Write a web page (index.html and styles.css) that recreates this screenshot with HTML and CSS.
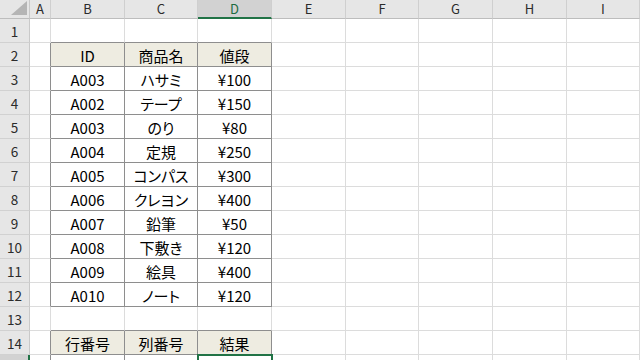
FILE: index.html
```html
<!DOCTYPE html>
<html lang="ja">
<head>
<meta charset="utf-8">
<link rel="stylesheet" href="styles.css">
</head>
<body>
<div class="sheet">
  <div class="corner"><svg class="tri" width="16" height="14" viewBox="0 0 16 14"><polygon points="16,0 16,14 0,14" fill="#b5b5b5"/></svg></div>
  <div class="hd">A</div><div class="hd">B</div><div class="hd">C</div><div class="hd sel">D</div><div class="hd">E</div><div class="hd">F</div><div class="hd">G</div><div class="hd">H</div><div class="hd">I</div>

  <div class="rh">1</div><div class="c"></div><div class="c tt"></div><div class="c tt"></div><div class="c tt"></div><div class="c"></div><div class="c"></div><div class="c"></div><div class="c"></div><div class="c"></div>

  <div class="rh">2</div><div class="c tl"></div><div class="c t th">ID</div><div class="c t th">商品名</div><div class="c t th">値段</div><div class="c"></div><div class="c"></div><div class="c"></div><div class="c"></div><div class="c"></div>

  <div class="rh">3</div><div class="c tl"></div><div class="c t">A003</div><div class="c t">ハサミ</div><div class="c t">¥100</div><div class="c"></div><div class="c"></div><div class="c"></div><div class="c"></div><div class="c"></div>

  <div class="rh">4</div><div class="c tl"></div><div class="c t">A002</div><div class="c t">テープ</div><div class="c t">¥150</div><div class="c"></div><div class="c"></div><div class="c"></div><div class="c"></div><div class="c"></div>

  <div class="rh">5</div><div class="c tl"></div><div class="c t">A003</div><div class="c t">のり</div><div class="c t">¥80</div><div class="c"></div><div class="c"></div><div class="c"></div><div class="c"></div><div class="c"></div>

  <div class="rh">6</div><div class="c tl"></div><div class="c t">A004</div><div class="c t">定規</div><div class="c t">¥250</div><div class="c"></div><div class="c"></div><div class="c"></div><div class="c"></div><div class="c"></div>

  <div class="rh">7</div><div class="c tl"></div><div class="c t">A005</div><div class="c t">コンパス</div><div class="c t">¥300</div><div class="c"></div><div class="c"></div><div class="c"></div><div class="c"></div><div class="c"></div>

  <div class="rh">8</div><div class="c tl"></div><div class="c t">A006</div><div class="c t">クレヨン</div><div class="c t">¥400</div><div class="c"></div><div class="c"></div><div class="c"></div><div class="c"></div><div class="c"></div>

  <div class="rh">9</div><div class="c tl"></div><div class="c t">A007</div><div class="c t">鉛筆</div><div class="c t">¥50</div><div class="c"></div><div class="c"></div><div class="c"></div><div class="c"></div><div class="c"></div>

  <div class="rh">10</div><div class="c tl"></div><div class="c t">A008</div><div class="c t">下敷き</div><div class="c t">¥120</div><div class="c"></div><div class="c"></div><div class="c"></div><div class="c"></div><div class="c"></div>

  <div class="rh">11</div><div class="c tl"></div><div class="c t">A009</div><div class="c t">絵具</div><div class="c t">¥400</div><div class="c"></div><div class="c"></div><div class="c"></div><div class="c"></div><div class="c"></div>

  <div class="rh">12</div><div class="c tl"></div><div class="c t">A010</div><div class="c t">ノート</div><div class="c t">¥120</div><div class="c"></div><div class="c"></div><div class="c"></div><div class="c"></div><div class="c"></div>

  <div class="rh">13</div><div class="c"></div><div class="c tt"></div><div class="c tt"></div><div class="c tt"></div><div class="c"></div><div class="c"></div><div class="c"></div><div class="c"></div><div class="c"></div>

  <div class="rh">14</div><div class="c tl"></div><div class="c t th">行番号</div><div class="c t th">列番号</div><div class="c t th">結果</div><div class="c"></div><div class="c"></div><div class="c"></div><div class="c"></div><div class="c"></div>

  <div class="rh rsel"></div><div class="c tl"></div><div class="c t"></div><div class="c t"></div><div class="c t active"></div><div class="c"></div><div class="c"></div><div class="c"></div><div class="c"></div><div class="c"></div>
</div>
</body>
</html>
```

FILE: styles.css
```css
html, body {
  margin: 0;
  padding: 0;
  background: #ffffff;
  overflow: hidden;
}

.sheet {
  display: grid;
  grid-template-columns: 30px 21px 74px 73px 74px 74px 73px 74px 74px 73px;
  grid-template-rows: 19px repeat(15, 24px);
  width: 640px;
  height: 360px;
  overflow: hidden;
  font-family: "Noto Sans CJK JP", "Noto Sans", sans-serif;
  color: #000;
}

.sheet > div {
  box-sizing: border-box;
  display: flex;
  align-items: center;
  justify-content: center;
  white-space: nowrap;
  overflow: hidden;
}

.corner {
  background: #e6e6e6;
  border-right: 1px solid #c9c9c9;
  border-bottom: 1px solid #bdbdbd;
  justify-content: flex-end !important;
  align-items: flex-end !important;
  padding: 0 2px 3px 0;
}

.tri { display: block; }

.hd {
  background: #e6e6e6;
  border-right: 1px solid #cfcfcf;
  border-bottom: 1px solid #bdbdbd;
  font-size: 13px;
  color: #2b2b2b;
  line-height: 18px;
}

.hd.sel {
  background: #d2d2d2;
  color: #1e6b41;
  border-bottom: 2px solid #217346;
}

.rh {
  background: #e6e6e6;
  border-right: 1px solid #c9c9c9;
  border-bottom: 1px solid #d1d1d1;
  font-size: 13.5px;
  color: #2b2b2b;
  padding-top: 1px;
}

.rh.rsel {
  background: #d2d2d2;
  border-right: 2px solid #217346;
}

.c {
  border-right: 1px solid #dcdcdc;
  border-bottom: 1px solid #dcdcdc;
  font-size: 15px;
  padding-top: 1px;
  font-feature-settings: "palt";
}

.c.t {
  border-right-color: #8e8e8e;
  border-bottom-color: #8e8e8e;
}

.c.tl { border-right-color: #8e8e8e; }
.c.tt { border-bottom-color: #8e8e8e; }

.th { background: #eeece1; }

.active {
  outline: 2px solid #217346;
  outline-offset: -1px;
}
```
